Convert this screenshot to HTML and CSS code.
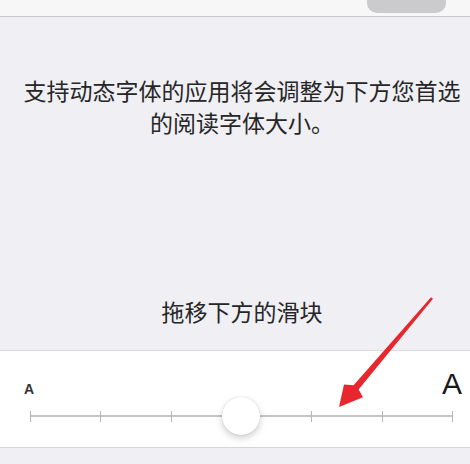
FILE: index.html
```html
<!DOCTYPE html>
<html lang="zh-CN">
<head>
<meta charset="utf-8">
<title>更大字体</title>
<link rel="stylesheet" href="styles.css">
</head>
<body>
<div class="screen">
  <header class="navbar">
    <span class="nav-button"></span>
  </header>

  <p class="description">支持动态字体的应用将会调整为下方您首选<br>的阅读字体大小。</p>

  <p class="hint">拖移下方的滑块</p>

  <section class="size-panel">
    <div class="size-labels">
      <span class="label-small">A</span>
      <span class="label-large">A</span>
    </div>
    <div class="slider">
      <div class="track">
        <span class="tick"></span>
        <span class="tick"></span>
        <span class="tick"></span>
        <span class="tick"></span>
        <span class="tick"></span>
        <span class="tick"></span>
        <span class="tick"></span>
      </div>
      <span class="thumb"></span>
    </div>
  </section>

  <svg class="pointer" width="470" height="464" viewBox="0 0 470 464">
    <polygon points="433,298.8 358.6,389.4 363,397.2 339,407 344,384.4 353.6,385.2 431,297.2" fill="#e8262d"/>
  </svg>
</div>
</body>
</html>
```

FILE: styles.css
```css
html, body {
  margin: 0;
  padding: 0;
}

body {
  width: 470px;
  height: 464px;
  overflow: hidden;
  background: #efeff4;
  font-family: "Noto Sans CJK SC", "Noto Sans", sans-serif;
  color: #262626;
}

.screen {
  position: relative;
  width: 484px;
  height: 464px;
  display: flex;
  flex-direction: column;
}

.navbar {
  height: 16px;
  background: #f7f7f8;
  border-bottom: 1px solid #c9c9cc;
  display: flex;
  justify-content: flex-end;
  padding-right: 38px;
}

.nav-button {
  width: 79px;
  height: 13px;
  background: #cbcbcd;
  border-radius: 0 0 10px 10px;
}

.description {
  margin: 57px 0 0;
  font-size: 23px;
  line-height: 32px;
  text-align: center;
}

.hint {
  margin: 157px 0 0;
  font-size: 23px;
  line-height: 32px;
  text-align: center;
}

.size-panel {
  margin-top: 23px;
  height: 96px;
  background: #ffffff;
  border-top: 1px solid #dcdce0;
  border-bottom: 1px solid #d6d6da;
  display: flex;
  flex-direction: column;
}

.size-labels {
  display: flex;
  justify-content: space-between;
  align-items: baseline;
  height: 30px;
  line-height: 30px;
  margin-top: 18px;
  padding: 0 22px 0 24px;
  font-family: "Liberation Sans", Arial, sans-serif;
  color: #1a1a1a;
}

.label-small {
  font-size: 14px;
  font-weight: bold;
  color: #333;
}

.label-large {
  font-size: 30px;
}

.slider {
  position: relative;
  margin: 7px 31px 0 30px;
  height: 20px;
}

.track {
  position: absolute;
  left: 0;
  right: 0;
  top: 10px;
  height: 0;
  border-top: 2px solid #c4c4c6;
  margin-top: -1px;
  display: flex;
  justify-content: space-between;
}

.tick {
  width: 1px;
  height: 11px;
  margin-top: -6px;
  background: #b5b5b8;
}

.thumb {
  position: absolute;
  left: 192px;
  top: -9px;
  width: 38px;
  height: 38px;
  border-radius: 50%;
  background: #ffffff;
  box-shadow: 0 3px 7px rgba(0, 0, 0, 0.2), 0 0 1px rgba(0, 0, 0, 0.18);
}

.pointer {
  position: absolute;
  left: 0;
  top: 0;
  pointer-events: none;
}
```
